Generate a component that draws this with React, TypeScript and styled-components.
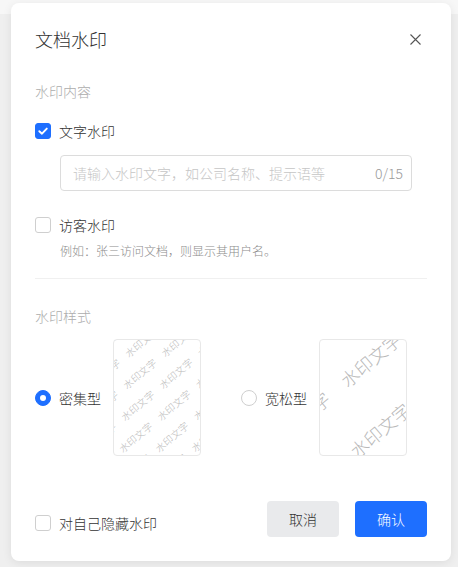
import React, { useState } from "react";
import styled, { createGlobalStyle } from "styled-components";

const BLUE = "#1e6fff";

const GlobalStyle = createGlobalStyle`
  html, body { margin: 0; padding: 0; }
  body {
    font-family: "Noto Sans CJK SC", "Noto Sans", sans-serif;
    font-weight: 300;
    background: #efefef;
  }
`;

const Backdrop = styled.div`
  width: 458px;
  height: 567px;
  box-sizing: border-box;
  padding: 3px 7px 0 11px;
  background: linear-gradient(#f7f7f7 0, #f7f7f7 14px, #efefef 14px);
  overflow: hidden;
`;

const Dialog = styled.div`
  width: 440px;
  height: 558px;
  box-sizing: border-box;
  background: #fff;
  border-radius: 8px;
  box-shadow: 0 2px 10px rgba(0, 0, 0, 0.08);
  padding: 23px 24px 24px;
  display: flex;
  flex-direction: column;
`;

const Header = styled.div`
  display: flex;
  align-items: center;
  justify-content: space-between;
  height: 26px;
`;

const Title = styled.h2`
  margin: 0;
  font-size: 18px;
  font-weight: 300;
  line-height: 26px;
  color: #333;
`;

const CloseButton = styled.button`
  width: 24px;
  height: 24px;
  padding: 0;
  border: none;
  background: none;
  display: flex;
  align-items: center;
  justify-content: center;
  cursor: pointer;
`;

const SectionLabel = styled.div<{ $mt: number }>`
  margin-top: ${(p) => p.$mt}px;
  font-size: 14px;
  line-height: 20px;
  color: #adadad;
`;

const CheckRow = styled.label<{ $mt?: number }>`
  display: flex;
  align-items: center;
  gap: 8px;
  margin-top: ${(p) => p.$mt ?? 0}px;
  font-size: 14px;
  line-height: 20px;
  color: #333;
  cursor: pointer;
`;

const CheckBox = styled.span<{ $checked: boolean }>`
  width: 16px;
  height: 16px;
  box-sizing: border-box;
  border-radius: 3px;
  border: 1px solid ${(p) => (p.$checked ? BLUE : "#cfcfcf")};
  background: ${(p) => (p.$checked ? BLUE : "#fff")};
  display: flex;
  align-items: center;
  justify-content: center;
  flex-shrink: 0;
`;

const InputWrap = styled.div`
  margin: 14px 15px 0 25px;
  height: 36px;
  box-sizing: border-box;
  border: 1px solid #dcdcdc;
  border-radius: 4px;
  display: flex;
  align-items: center;
  padding: 0 8px 0 12px;
`;

const TextInput = styled.input`
  flex: 1;
  min-width: 0;
  border: none;
  outline: none;
  padding: 0;
  background: transparent;
  font-family: inherit;
  font-weight: 300;
  font-size: 14px;
  color: #333;
  &::placeholder {
    color: #c6c6c6;
  }
`;

const Counter = styled.span`
  font-size: 14px;
  color: #9a9a9a;
`;

const Hint = styled.div`
  margin: 7px 0 0 25px;
  font-size: 12px;
  line-height: 18px;
  color: #8c8c8c;
`;

const Divider = styled.div`
  margin-top: 18px;
  height: 1px;
  background: #f0f0f0;
`;

const StyleRow = styled.div`
  display: flex;
  align-items: center;
  gap: 40px;
  margin-top: 13px;
`;

const StyleOption = styled.div`
  display: flex;
  align-items: center;
  gap: 12px;
`;

const Radio = styled.span<{ $checked: boolean }>`
  width: 16px;
  height: 16px;
  box-sizing: border-box;
  border-radius: 50%;
  border: 1px solid ${(p) => (p.$checked ? BLUE : "#cfcfcf")};
  background: ${(p) => (p.$checked ? BLUE : "#fff")};
  display: flex;
  align-items: center;
  justify-content: center;
  flex-shrink: 0;
  &::after {
    content: "";
    width: 6px;
    height: 6px;
    border-radius: 50%;
    background: #fff;
    display: ${(p) => (p.$checked ? "block" : "none")};
  }
`;

const Preview = styled.div`
  width: 88px;
  height: 117px;
  box-sizing: border-box;
  border: 1px solid #e8e8e8;
  border-radius: 4px;
  overflow: hidden;
  background: #fff;
  svg {
    display: block;
  }
`;

const Footer = styled.div`
  margin-top: auto;
  display: flex;
  align-items: flex-end;
  justify-content: space-between;
`;

const HideRow = styled(CheckRow)`
  margin-bottom: 4px;
`;

const Buttons = styled.div`
  display: flex;
  gap: 16px;
`;

const Button = styled.button<{ $primary?: boolean }>`
  width: 72px;
  height: 36px;
  border: none;
  border-radius: 4px;
  font-family: inherit;
  font-weight: 300;
  font-size: 14px;
  cursor: pointer;
  background: ${(p) => (p.$primary ? BLUE : "#e9eaec")};
  color: ${(p) => (p.$primary ? "#fff" : "#333")};
`;

const CheckMark = () => (
  <svg width="12" height="12" viewBox="0 0 12 12">
    <path d="M2.3 6.2 L5 8.7 L9.8 3.6" fill="none" stroke="#fff" strokeWidth="1.9" strokeLinecap="round" strokeLinejoin="round" />
  </svg>
);

const CloseIcon = () => (
  <svg width="11" height="11" viewBox="0 0 11 11">
    <path d="M0.5 0.5 L10.5 10.5 M10.5 0.5 L0.5 10.5" stroke="#555" strokeWidth="1.1" />
  </svg>
);

// layout of the watermark text on the little thumbnails, in rotated coords
const patterns = {
  dense: { size: 10, period: 50, line: 23, shift: -22, u0: -22, v0: 42 },
  loose: { size: 18, period: 92, line: 60, shift: -38, u0: -10, v0: 47 },
};

const WatermarkPreview = ({ kind }: { kind: "dense" | "loose" }) => {
  const cfg = patterns[kind];
  const items: { u: number; v: number; key: string }[] = [];
  for (let k = -6; k <= 8; k++) {
    const v = cfg.v0 + k * cfg.line;
    if (v < -cfg.size || v > 150 + cfg.size) continue;
    for (let n = -6; n <= 6; n++) {
      const u = cfg.u0 + k * cfg.shift + n * cfg.period;
      if (u < -80 - cfg.size * 4 || u > 75) continue;
      items.push({ u, v, key: `${k}_${n}` });
    }
  }
  return (
    <svg width="86" height="115" viewBox="0 0 86 115">
      <g transform="rotate(-40)" fill="#b8b8b8" fontSize={cfg.size} fontWeight={300} fontFamily='"Noto Sans CJK SC", sans-serif'>
        {items.map((i) => (
          <text key={i.key} x={i.u} y={i.v} dominantBaseline="central">
            水印文字
          </text>
        ))}
      </g>
    </svg>
  );
};

const App = () => {
  const [textMark, setTextMark] = useState(true);
  const [visitorMark, setVisitorMark] = useState(false);
  const [hideSelf, setHideSelf] = useState(false);
  const [style, setStyle] = useState<"dense" | "loose">("dense");
  const [text, setText] = useState("");

  return (
    <>
      <GlobalStyle />
      <Backdrop>
        <Dialog>
          <Header>
            <Title>文档水印</Title>
            <CloseButton aria-label="关闭">
              <CloseIcon />
            </CloseButton>
          </Header>

          <SectionLabel $mt={29}>水印内容</SectionLabel>
          <CheckRow $mt={20} onClick={() => setTextMark(!textMark)}>
            <CheckBox $checked={textMark}>{textMark && <CheckMark />}</CheckBox>
            文字水印
          </CheckRow>
          <InputWrap>
            <TextInput
              value={text}
              maxLength={15}
              placeholder="请输入水印文字，如公司名称、提示语等"
              onChange={(e) => setText(e.target.value)}
            />
            <Counter>{text.length}/15</Counter>
          </InputWrap>

          <CheckRow $mt={24} onClick={() => setVisitorMark(!visitorMark)}>
            <CheckBox $checked={visitorMark}>{visitorMark && <CheckMark />}</CheckBox>
            访客水印
          </CheckRow>
          <Hint>例如：张三访问文档，则显示其用户名。</Hint>

          <Divider />

          <SectionLabel $mt={27}>水印样式</SectionLabel>
          <StyleRow>
            <StyleOption>
              <CheckRow onClick={() => setStyle("dense")}>
                <Radio $checked={style === "dense"} />
                密集型
              </CheckRow>
              <Preview>
                <WatermarkPreview kind="dense" />
              </Preview>
            </StyleOption>
            <StyleOption>
              <CheckRow onClick={() => setStyle("loose")}>
                <Radio $checked={style === "loose"} />
                宽松型
              </CheckRow>
              <Preview>
                <WatermarkPreview kind="loose" />
              </Preview>
            </StyleOption>
          </StyleRow>

          <Footer>
            <HideRow onClick={() => setHideSelf(!hideSelf)}>
              <CheckBox $checked={hideSelf}>{hideSelf && <CheckMark />}</CheckBox>
              对自己隐藏水印
            </HideRow>
            <Buttons>
              <Button>取消</Button>
              <Button $primary>确认</Button>
            </Buttons>
          </Footer>
        </Dialog>
      </Backdrop>
    </>
  );
};

export default App;
